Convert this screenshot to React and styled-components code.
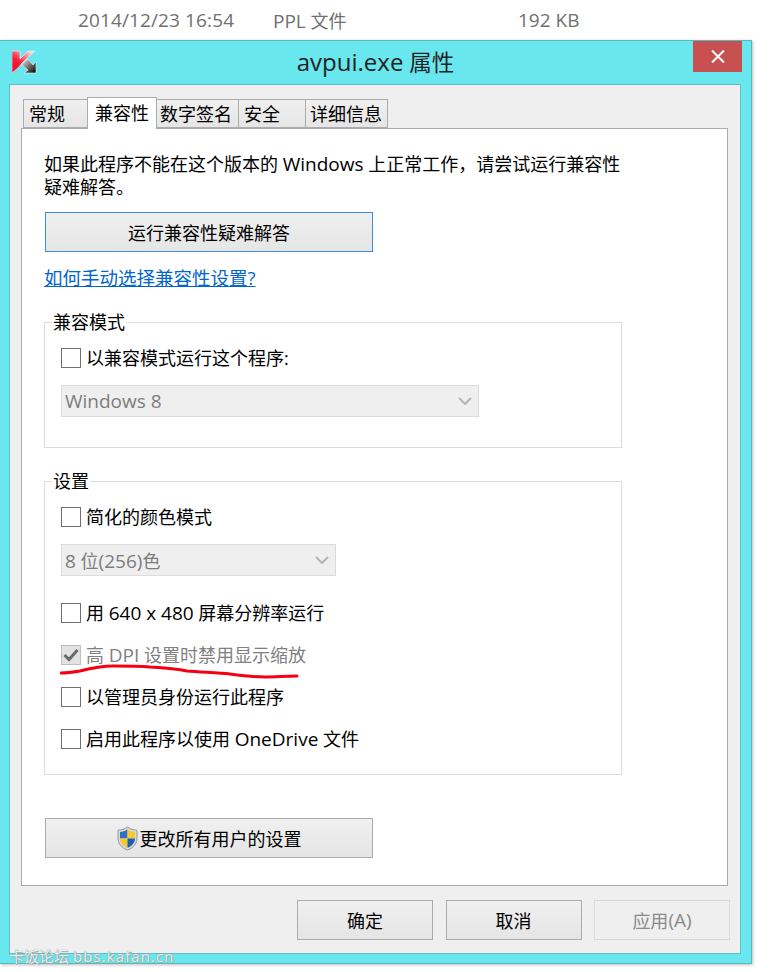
import styled, { createGlobalStyle } from 'styled-components';

const GlobalStyle = createGlobalStyle`
    html, body {
        margin: 0;
        padding: 0;
        background: #fff;
    }
    * {
        box-sizing: border-box;
    }
`;

const FONT = `"Open Sans", "Noto Sans CJK SC", sans-serif`;

const KasperskyLogo = () => (
    <svg width="25" height="25" viewBox="0 0 25 25">
        <defs>
            <linearGradient id="kRed" x1="0" y1="1" x2="0.7" y2="0">
                <stop offset="0" stopColor="#f0001c" />
                <stop offset="0.5" stopColor="#f5203a" />
                <stop offset="1" stopColor="#fbd0d4" />
            </linearGradient>
            <linearGradient id="kGray" x1="0" y1="0" x2="1" y2="1">
                <stop offset="0" stopColor="#e8e8e8" />
                <stop offset="0.55" stopColor="#666" />
                <stop offset="1" stopColor="#000" />
            </linearGradient>
        </defs>
        <path d="M0 1H8V9L16 1H23L10 13L7 17L0 23Z" fill="url(#kRed)" stroke="#f4f4f4" strokeWidth="0.6" />
        <path d="M12 12L16 9L21 15L24 12V23H12L16 20L10 15Z" fill="url(#kGray)" stroke="#f4f4f4" strokeWidth="0.6" />
    </svg>
);

const ShieldIcon = () => (
    <svg width="21" height="25" viewBox="0 0 21 25">
        <path d="M10.5 1C7.5 3.2 4.5 4 1 4.2V12C1 18 5 22 10.5 24C16 22 20 18 20 12V4.2C16.5 4 13.5 3.2 10.5 1Z" fill="#d8d8d8" stroke="#9a9a9a" />
        <path d="M10.5 3.4C8 5 5.5 5.8 3 6V12.4H10.5Z" fill="#2f6fc0" />
        <path d="M10.5 3.4C13 5 15.5 5.8 18 6V12.4H10.5Z" fill="#f5c92e" />
        <path d="M3 12.4H10.5V21.8C6.4 20 3.2 17 3 12.4Z" fill="#f5c92e" />
        <path d="M18 12.4H10.5V21.8C14.6 20 17.8 17 18 12.4Z" fill="#1f5fae" />
    </svg>
);

const Chevron = () => (
    <svg width="14" height="8" viewBox="0 0 14 8">
        <path d="M1 1L7 7L13 1" fill="none" stroke="#b4b4b4" strokeWidth="2" />
    </svg>
);

const CheckMark = () => (
    <svg width="16" height="14" viewBox="0 0 16 14">
        <path d="M1.5 7L6 11.5L14.5 2" fill="none" stroke="#6a6a6a" strokeWidth="3" />
    </svg>
);

const Option = ({ children, checked, disabled, gap }) => (
    <OptionRow $gap={gap}>
        <Box $disabled={disabled}>{checked && <CheckMark />}</Box>
        <OptionLabel $disabled={disabled}>{children}</OptionLabel>
    </OptionRow>
);

const TABS = [
    { label: '常规', width: 65, pad: 5 },
    { label: '兼容性', width: 70, pad: 7, active: true },
    { label: '数字签名', width: 83, pad: 3 },
    { label: '安全', width: 68, pad: 5 },
    { label: '详细信息', width: 83, pad: 4 },
];

export default function App() {
    return (
        <Page>
            <GlobalStyle />
            <FileRow>
                <FileDate><Latin>2014/12/23 16:54</Latin></FileDate>
                <FileType><Latin>PPL</Latin> 文件</FileType>
                <Latin>192 KB</Latin>
            </FileRow>

            <Window>
                <TitleBar>
                    <LogoSlot><KasperskyLogo /></LogoSlot>
                    <Title><TitleLatin>avpui.exe</TitleLatin> 属性</Title>
                    <CloseButton>
                        <svg width="14" height="13" viewBox="0 0 14 13">
                            <path d="M1 0.5L13 12.5M13 0.5L1 12.5" stroke="#fff" strokeWidth="2" />
                        </svg>
                    </CloseButton>
                </TitleBar>

                <Client>
                    <TabRow>
                        {TABS.map((tab) => (
                            <Tab key={tab.label} $width={tab.width} $pad={tab.pad} $active={tab.active}>{tab.label}</Tab>
                        ))}
                    </TabRow>

                    <Panel>
                        <Intro>
                            如果此程序不能在这个版本的 <Latin>Windows</Latin> 上正常工作，请尝试运行兼容性<br />疑难解答。
                        </Intro>
                        <WideButton $primary>运行兼容性疑难解答</WideButton>
                        <HelpLink>如何手动选择兼容性设置?</HelpLink>

                        <Group $top={20} $height={138}>
                            <Legend>兼容模式</Legend>
                            <Option>以兼容模式运行这个程序:</Option>
                            <Select $width={418} $gap={17}>
                                <Latin>Windows 8</Latin>
                                <Chevron />
                            </Select>
                        </Group>

                        <Group $top={21} $height={306}>
                            <Legend>设置</Legend>
                            <Option>简化的颜色模式</Option>
                            <Select $width={275} $gap={17}>
                                <span><Latin>8</Latin> 位<Latin>(256)</Latin>色</span>
                                <Chevron />
                            </Select>
                            <Option gap={27}>用 <Latin>640 x 480</Latin> 屏幕分辨率运行</Option>
                            <Option gap={22} checked disabled>高 <Latin>DPI</Latin> 设置时禁用显示缩放</Option>
                            <Option gap={22}>以管理员身份运行此程序</Option>
                            <Option gap={22}>启用此程序以使用 <Latin>OneDrive</Latin> 文件</Option>
                        </Group>

                        <WideButton $top={43}>
                            <ShieldIcon />
                            更改所有用户的设置
                        </WideButton>
                    </Panel>

                    <Footer>
                        <DialogButton>确定</DialogButton>
                        <DialogButton>取消</DialogButton>
                        <DialogButton $disabled>应用<Latin>(A)</Latin></DialogButton>
                    </Footer>
                </Client>
            </Window>

            <Underline width="240" height="16" viewBox="0 0 240 16">
                <path d="M1 9C8 9 14 8 20 7C32 4 42 2 53 2C66 2 78 2 90 3C108 4 118 5 127 7C140 8 158 9 170 10C185 12 195 13 205 13C215 13 226 12 237 12" fill="none" stroke="#f40012" strokeWidth="3" strokeLinecap="round" />
            </Underline>
            <Watermark>卡饭论坛 <WatermarkLatin>bbs.kafan.cn</WatermarkLatin></Watermark>
        </Page>
    );
}

const Page = styled.div`
    position: relative;
    width: 769px;
    height: 972px;
    overflow: hidden;
    background: #fff;
    font-family: ${FONT};
    font-size: 18px;
    color: #000;
`;

const Latin = styled.span`
    font-size: 19px;
    line-height: 1;
`;

const FileRow = styled.div`
    display: flex;
    align-items: center;
    height: 40px;
    padding: 0 0 0 78px;
    color: #6f6f6f;
    font-size: 18px;
`;

const FileDate = styled.span`
    width: 195px;
    letter-spacing: 0.12px;
`;

const FileType = styled.span`
    width: 245px;
`;

const Window = styled.div`
    display: flex;
    flex-direction: column;
    width: 752px;
    height: 924px;
    background: #68e7ee;
    border: 1px solid #55b9bd;
    border-left: none;
    box-shadow: 1px 1px 3px rgba(0, 0, 0, 0.25);
`;

const TitleBar = styled.div`
    position: relative;
    display: flex;
    align-items: flex-start;
    justify-content: center;
    height: 43px;
    flex-shrink: 0;
`;

const LogoSlot = styled.div`
    position: absolute;
    left: 12px;
    top: 9px;
    display: flex;
`;

const Title = styled.div`
    margin-top: 6px;
    line-height: 32px;
    font-size: 22.5px;
    color: #222;
`;

const TitleLatin = styled.span`
    font-size: 24px;
    line-height: 1;
`;

const CloseButton = styled.div`
    position: absolute;
    right: 9px;
    top: 0;
    display: flex;
    align-items: center;
    justify-content: center;
    width: 49px;
    height: 31px;
    padding-bottom: 1px;
    background: #c75050;
`;

const Client = styled.div`
    display: flex;
    flex-direction: column;
    width: 732px;
    height: 870px;
    margin-left: 9px;
    padding: 12px 0 0 11px;
    background: #efefef;
    border: 1px solid #5cc0c6;
`;

const TabRow = styled.div`
    display: flex;
    align-items: flex-end;
    height: 31px;
    padding-left: 3px;
`;

const Tab = styled.div`
    position: relative;
    display: flex;
    align-items: center;
    width: ${({ $width }) => $width}px;
    margin-bottom: ${({ $active }) => ($active ? '-1px' : '0')};
    margin-left: -1px;
    height: ${({ $active }) => ($active ? '32px' : '29px')};
    padding: 0 0 ${({ $active }) => ($active ? '3px' : '2px')} ${({ $pad }) => $pad}px;
    font-size: 18px;
    white-space: nowrap;
    color: #000;
    background: ${({ $active }) => ($active ? '#fff' : 'linear-gradient(#f0f0f0, #e5e5e5)')};
    border: 1px solid #acacac;
    border-bottom: ${({ $active }) => ($active ? 'none' : '1px solid #acacac')};
    z-index: ${({ $active }) => ($active ? 1 : 0)};
`;

const Panel = styled.div`
    display: flex;
    flex-direction: column;
    align-items: flex-start;
    width: 707px;
    height: 758px;
    padding: 24px 0 0 22px;
    background: #fff;
    border: 1px solid #acacac;
`;

const Intro = styled.div`
    font-size: 18px;
    line-height: 23px;
    white-space: nowrap;
`;

const WideButton = styled.div`
    display: flex;
    align-items: center;
    justify-content: center;
    gap: 2px;
    flex-shrink: 0;
    width: 328px;
    height: 40px;
    margin-top: ${({ $top }) => $top || 13}px;
    margin-left: 1px;
    font-size: 18px;
    background: linear-gradient(#f0f0f0, #e5e5e5);
    border: 1px solid ${({ $primary }) => ($primary ? '#3c8fd8' : '#acacac')};
`;

const HelpLink = styled.a`
    margin-top: 14px;
    line-height: 24px;
    font-size: 18.5px;
    color: #0066cc;
    text-decoration: underline;
`;

const Group = styled.fieldset`
    flex-shrink: 0;
    width: 578px;
    height: ${({ $height }) => $height}px;
    margin: ${({ $top }) => $top}px 0 0;
    padding: 14px 0 0 16px;
    border: 1px solid #dcdcdc;
`;

const Legend = styled.legend`
    margin-left: -9px;
    padding: 0 1px;
    line-height: 24px;
    font-size: 18px;
`;

const OptionRow = styled.div`
    display: flex;
    align-items: center;
    gap: 5px;
    height: 20px;
    margin-top: ${({ $gap }) => $gap || 0}px;
`;

const Box = styled.div`
    display: flex;
    align-items: center;
    justify-content: center;
    flex-shrink: 0;
    width: 20px;
    height: 20px;
    background: ${({ $disabled }) => ($disabled ? '#e2e2e2' : '#fff')};
    border: 1px solid ${({ $disabled }) => ($disabled ? '#c0c0c0' : '#707070')};
`;

const OptionLabel = styled.span`
    padding-bottom: 2px;
    font-size: 18px;
    white-space: nowrap;
    color: ${({ $disabled }) => ($disabled ? '#808080' : '#000')};
`;

const Select = styled.div`
    display: flex;
    align-items: center;
    justify-content: space-between;
    width: ${({ $width }) => $width}px;
    height: 32px;
    margin-top: ${({ $gap }) => $gap}px;
    padding: 0 6px 0 3px;
    font-size: 18px;
    color: #7d7d7d;
    background: #efefef;
    border: 1px solid #dcdcdc;
`;

const Footer = styled.div`
    display: flex;
    gap: 12.5px;
    margin-top: 14px;
    padding-left: 276px;
`;

const DialogButton = styled.div`
    display: flex;
    align-items: center;
    justify-content: center;
    width: 136px;
    height: 40px;
    font-size: 18px;
    color: ${({ $disabled }) => ($disabled ? '#8a8a8a' : '#000')};
    background: ${({ $disabled }) => ($disabled ? '#efefef' : 'linear-gradient(#f0f0f0, #e5e5e5)')};
    border: 1px solid ${({ $disabled }) => ($disabled ? '#d9d9d9' : '#acacac')};
`;

const Underline = styled.svg`
    position: absolute;
    left: 60px;
    top: 664px;
`;

const Watermark = styled.div`
    position: absolute;
    left: 9px;
    top: 945px;
    font-size: 15px;
    line-height: 22px;
    color: #eaf0f0;
    text-shadow: 0 0 1px #888, 1px 1px 1px #aaa;
`;

const WatermarkLatin = styled.span`
    letter-spacing: 1.1px;
`;
